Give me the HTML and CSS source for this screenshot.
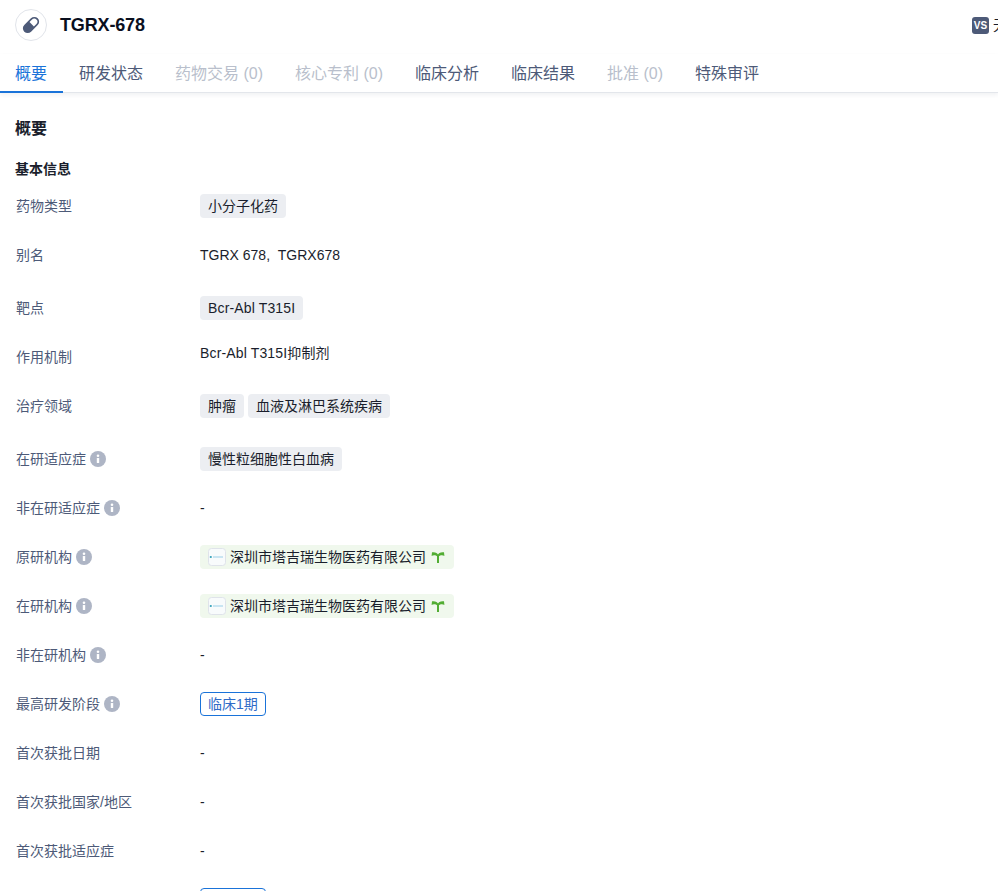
FILE: index.html
```html
<!DOCTYPE html>
<html lang="zh-CN">
<head>
<meta charset="utf-8">
<title>TGRX-678</title>
<link rel="stylesheet" href="styles.css">
</head>
<body>
<svg class="defs" width="0" height="0" aria-hidden="true">
  <symbol id="info" viewBox="0 0 16 16">
    <circle cx="8" cy="8" r="8" fill="#aeb5c5"/>
    <rect x="6.800" y="7" width="2.400" height="5" rx=".6" fill="#fff"/>
    <circle cx="8" cy="4.800" r="1.300" fill="#fff"/>
  </symbol>
  <symbol id="logo" viewBox="0 0 18 18">
    <rect x=".5" y=".5" width="17" height="17" rx="3" fill="#f8fbfc" stroke="#dfe3ea"/>
    <circle cx="2.800" cy="9" r="1.100" fill="#2f9fb8"/>
    <path d="M5 9h10" stroke="#b5dcee" stroke-width="1.400"/>
  </symbol>
  <symbol id="sprout" viewBox="0 0 14 14">
    <path d="M7 13V5" stroke="#52ad33" stroke-width="2" fill="none"/>
    <path d="M7.500 5.500C6.500 2.800 4 1.800 1 2.300L.6 6C2 4.900 4.500 4.700 6.500 6.500Z" fill="#52ad33"/>
    <path d="M6.500 5.500C7.500 2.800 10 1.800 13 2.300L13.400 6C12 4.900 9.500 4.700 7.500 6.500Z" fill="#52ad33"/>
  </symbol>
</svg>
<header class="header">
  <div class="title-group">
    <span class="drug-icon">
      <svg width="20" height="20" viewBox="0 0 20 20">
        <g transform="rotate(45 10 10)">
          <rect x="5.200" y="0.500" width="9.600" height="19" rx="4.800" fill="#4d5a78"/>
          <path d="M6.900 9V5.400a3.100 3.100 0 0 1 6.200 0V9Z" fill="#fff"/>
        </g>
      </svg>
    </span>
    <h1 class="title">TGRX-678</h1>
  </div>
  <div class="vs-group">
    <span class="vs-badge">VS</span>
    <span class="vs-text">无</span>
  </div>
</header>
<nav class="tabs">
  <a class="tab tab-active">概要</a>
  <a class="tab">研发状态</a>
  <a class="tab tab-disabled">药物交易 (0)</a>
  <a class="tab tab-disabled">核心专利 (0)</a>
  <a class="tab">临床分析</a>
  <a class="tab">临床结果</a>
  <a class="tab tab-disabled">批准 (0)</a>
  <a class="tab">特殊审评</a>
</nav>
<main class="content">
  <h2 class="section-title">概要</h2>
  <h3 class="sub-title">基本信息</h3>
  <div class="row">
    <div class="label">药物类型</div>
    <div class="value"><span class="tag">小分子化药</span></div>
  </div>
  <div class="row row-tall">
    <div class="label">别名</div>
    <div class="value">TGRX 678,&nbsp;&nbsp;TGRX678</div>
  </div>
  <div class="row">
    <div class="label">靶点</div>
    <div class="value"><span class="tag target-name">Bcr-Abl T315I</span></div>
  </div>
  <div class="row">
    <div class="label">作用机制</div>
    <div class="value value-raised target-name">Bcr-Abl T315I抑制剂</div>
  </div>
  <div class="row row-tall">
    <div class="label">治疗领域</div>
    <div class="value"><span class="tag">肿瘤</span><span class="tag">血液及淋巴系统疾病</span></div>
  </div>
  <div class="row">
    <div class="label">在研适应症<svg class="info"><use href="#info"/></svg></div>
    <div class="value"><span class="tag">慢性粒细胞性白血病</span></div>
  </div>
  <div class="row">
    <div class="label">非在研适应症<svg class="info"><use href="#info"/></svg></div>
    <div class="value">-</div>
  </div>
  <div class="row">
    <div class="label">原研机构<svg class="info"><use href="#info"/></svg></div>
    <div class="value"><span class="org"><svg class="org-logo"><use href="#logo"/></svg>深圳市塔吉瑞生物医药有限公司<svg class="sprout"><use href="#sprout"/></svg></span></div>
  </div>
  <div class="row">
    <div class="label">在研机构<svg class="info"><use href="#info"/></svg></div>
    <div class="value"><span class="org"><svg class="org-logo"><use href="#logo"/></svg>深圳市塔吉瑞生物医药有限公司<svg class="sprout"><use href="#sprout"/></svg></span></div>
  </div>
  <div class="row">
    <div class="label">非在研机构<svg class="info"><use href="#info"/></svg></div>
    <div class="value">-</div>
  </div>
  <div class="row">
    <div class="label">最高研发阶段<svg class="info"><use href="#info"/></svg></div>
    <div class="value"><span class="phase">临床1期</span></div>
  </div>
  <div class="row">
    <div class="label">首次获批日期</div>
    <div class="value">-</div>
  </div>
  <div class="row">
    <div class="label">首次获批国家/地区</div>
    <div class="value">-</div>
  </div>
  <div class="row">
    <div class="label">首次获批适应症</div>
    <div class="value">-</div>
  </div>
  <div class="row">
    <div class="label">最高研发阶段(中国)</div>
    <div class="value"><span class="phase">临床1期</span></div>
  </div>
</main>
</body>
</html>
```
FILE: styles.css
```css
* { box-sizing: border-box; }
html, body { margin: 0; height: 891px; overflow: hidden; background: #fff; }
body {
  font-family: "Liberation Sans", "Noto Sans CJK SC", sans-serif;
  font-size: 14px;
  color: #1a1e2c;
}
.defs { position: absolute; }

.header {
  height: 54px;
  padding: 9px 0 0 15px;
  display: flex;
  justify-content: space-between;
  overflow: hidden;
}
.title-group { display: flex; align-items: flex-start; gap: 13px; }
.drug-icon {
  width: 32px;
  height: 32px;
  border: 1px solid #e1e4ea;
  border-radius: 50%;
  display: flex;
  align-items: center;
  justify-content: center;
}
.title {
  margin: 0;
  font-size: 18px;
  font-weight: 700;
  line-height: 32px;
  letter-spacing: -.15px;
  color: #0a0f1e;
}
.vs-group {
  display: flex;
  align-items: flex-start;
  gap: 4px;
  margin-right: -9px;
  padding-top: 8px;
  flex: none;
}
.vs-badge {
  width: 17px;
  height: 17px;
  border-radius: 3px;
  background: #4d5a78;
  color: #fff;
  font-size: 10px;
  font-weight: 700;
  line-height: 17px;
  text-align: center;
}
.vs-text { line-height: 17px; width: 14px; }

.tabs {
  display: flex;
  height: 39px;
  border-bottom: 1px solid #e3e6eb;
  box-shadow: 0 2px 4px rgba(40, 50, 80, .07);
}
.tab {
  height: 38px;
  padding: 0 16px;
  font-size: 16px;
  line-height: 40px;
  color: #4d5a78;
}
.tab:first-child { padding-left: 15px; }
.tab-active {
  height: 39px;
  color: #1a73d9;
  box-shadow: inset 0 -2px 0 #1a73d9;
}
.tab-disabled { color: #b9bfcc; }

.content { padding: 23px 0 0 15px; }
.section-title {
  margin: 0 0 17px;
  font-size: 16px;
  font-weight: 700;
  line-height: 26px;
}
.sub-title {
  margin: 0 0 15px;
  font-size: 14px;
  font-weight: 700;
  line-height: 20px;
}

.row { display: flex; height: 49px; }
.row-tall { height: 53px; }
.label {
  width: 185px;
  padding-left: 1px;
  flex: none;
  display: flex;
  align-items: center;
  gap: 4px;
  height: 22px;
  color: #4d5a78;
}
.value { display: flex; gap: 4px; line-height: 24px; }
.value-raised { margin-top: -4px; }
.target-name { letter-spacing: .15px; }
.tag {
  height: 24px;
  padding: 0 8px;
  border-radius: 4px;
  background: #eceef2;
}
.info { width: 16px; height: 16px; margin-top: 2px; flex: none; }
.org {
  width: 254px;
  height: 24px;
  padding-left: 8px;
  display: flex;
  align-items: center;
  border-radius: 4px;
  background: #f0f8ed;
}
.org-logo { width: 18px; height: 18px; margin-right: 4px; flex: none; }
.sprout { width: 14px; height: 14px; margin-left: 5px; flex: none; }
.phase {
  height: 24px;
  padding: 0 7px;
  line-height: 22px;
  border: 1px solid #1a73d9;
  border-radius: 4px;
  color: #2f6bc7;
}
```
